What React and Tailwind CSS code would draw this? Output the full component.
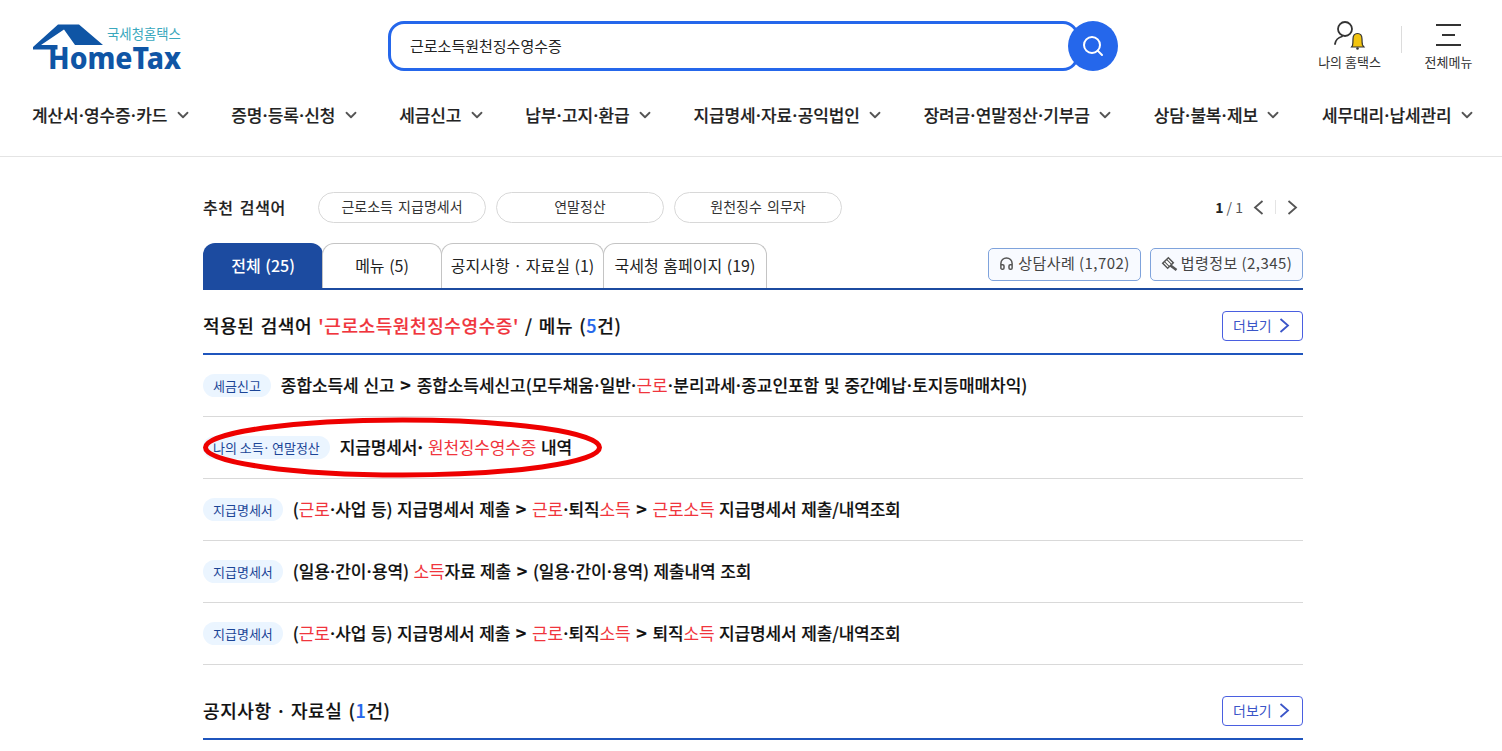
import React from "react";
import { ChevronDown, Search, Headphones } from "lucide-react";

const FONT = "[font-family:'Noto_Sans_CJK_KR','Noto_Sans',sans-serif]";

const NAV = [
  ["계산서", "영수증", "카드"],
  ["증명", "등록", "신청"],
  ["세금신고"],
  ["납부", "고지", "환급"],
  ["지급명세", "자료", "공익법인"],
  ["장려금", "연말정산", "기부금"],
  ["상담", "불복", "제보"],
  ["세무대리", "납세관리"],
];

const R = ({ children }) => <span className="text-[#f0353d] font-normal [-webkit-text-stroke:0px]">{children}</span>;
const D = () => <span className="-mx-[2px]">·</span>;
const G = () => <span className="font-bold text-[18px] mx-[1px]">&gt;</span>;

function Chev({ left = false, className = "" }) {
  return (
    <svg width="11" height="15" viewBox="0 0 11 15" fill="none" className={className}>
      <path d={left ? "M9.500 1 L2 7.500 L9.500 14" : "M1.500 1 L9 7.500 L1.500 14"} stroke="currentColor" strokeWidth="1.800" />
    </svg>
  );
}

function Logo() {
  return (
    <svg width="160" height="62" viewBox="0 0 160 62" className="block">
      <text x="74" y="17" fontSize="13.400" fontFamily="'Noto Sans CJK KR',sans-serif" fill="#3aa8bd">국세청홈택스</text>
      <text x="15" y="47" fontSize="31" fontWeight="800" textLength="133" lengthAdjust="spacingAndGlyphs" fontFamily="'Noto Sans',sans-serif" fill="#0f55a5">HomeTax</text>
      <path d="M0 25 L25 2.500 L46 2.500 L70 23 L42 23 L31 7.500 L8 23 L24.500 23 L24.500 27.500 L0 27.500 Z" fill="#0f55a5" />
    </svg>
  );
}

function Row({ tag, children, tight = false }) {
  return (
    <div className="flex items-center h-[62px] pb-[2px] border-b border-[#d9d9d9]">
      <span className="flex items-center h-[23px] mt-[2px] px-[10px] rounded-full bg-[#ebf5ff] text-[#1b4597] text-[13px] mr-[10px] whitespace-nowrap"><span>{tag}</span></span>
      <span className={`text-[17px] ${tight ? "tracking-[-0.07px]" : "tracking-[-0.15px]"} [word-spacing:1px] font-medium [-webkit-text-stroke:0.15px] text-[#111] whitespace-nowrap`}>{children}</span>
    </div>
  );
}

function More() {
  return (
    <span className="flex items-center justify-between h-[30px] w-[81px] pl-[10px] pr-[12px] rounded-[4px] border border-[#4a5fe0] text-[#3b55c8] text-[14px]">
      더보기
      <Chev />
    </span>
  );
}

function Tab({ w, children }) {
  return (
    <div className={`${w} flex items-center justify-center h-[45px] pb-[2px] bg-white border border-b-0 border-[#c4c4c4] rounded-t-[12px] -mr-px text-[16px] [word-spacing:1px] text-[#222] whitespace-nowrap`}><span>{children}</span></div>
  );
}

function Gavel() {
  return (
    <svg width="17" height="16" viewBox="0 0 17 16" fill="none">
      <g transform="rotate(45 7 7)" stroke="#555" strokeWidth="1.500">
        <rect x="3.500" y="3" width="7" height="8" fill="#fff" />
        <path d="M3.500 5.500 h7 M3.500 8.500 h7" strokeWidth="1" />
      </g>
      <path d="M9.500 9.500 L15.500 14" stroke="#555" strokeWidth="2.600" />
    </svg>
  );
}

export default function App() {
  return (
    <div className={`${FONT} w-[1502px] h-[751px] overflow-hidden bg-white text-[#222]`}>
      <header className="h-[157px] border-b border-[#e4e4e4]">
        <div className="flex items-start h-[92px] pl-[33px] pr-[29px]">
          <div className="w-[160px] h-[52px] mt-[22px]"><Logo /></div>
          <div className="flex items-center ml-[195px] mt-[21px]">
            <div className="flex items-center w-[691px] h-[50px] rounded-[16px] border-[3px] border-[#2567eb] pl-[19px] text-[15px] text-[#222]">근로소득원천징수영수증</div>
            <div className="flex items-center justify-center w-[50px] h-[50px] rounded-full bg-[#2567eb] -ml-[11px] relative">
              <Search size={24} color="#fff" strokeWidth={2} />
            </div>
          </div>
          <div className="flex ml-auto mt-[18px]">
            <div className="flex flex-col items-center w-[65px]">
              <svg width="36" height="32" viewBox="0 0 36 32" fill="none">
                <circle cx="13" cy="11" r="7" stroke="#333" strokeWidth="1.800" />
                <path d="M3 26 Q4 20 10 18.500" stroke="#333" strokeWidth="1.800" strokeLinecap="round" />
                <path d="M19.500 29 L20.500 27.500 C21 25 21 24 21 21 C21 17.500 23 15.500 25.500 15.500 C28 15.500 30 17.500 30 21 C30 24 30 25 30.500 27 L32 29 Z" fill="#f2c40f" stroke="#333" strokeWidth="1.200" />
                <circle cx="25.500" cy="30.500" r="1.300" fill="#333" />
              </svg>
              <span className="text-[13px] leading-[16px] mt-[4px] whitespace-nowrap text-[#333]">나의 홈택스</span>
            </div>
            <div className="w-px h-[27px] bg-[#dcdcdc] mt-[8px] ml-[19px] mr-[22px]" />
            <div className="flex flex-col items-center w-[49px]">
              <div className="flex flex-col items-center h-[32px] w-[25px] pt-[6px]">
                <div className="w-[25px] h-[2px] bg-[#333]" />
                <div className="w-[13px] h-[2px] bg-[#333] mt-[8px]" />
                <div className="w-[25px] h-[2px] bg-[#333] mt-[8px]" />
              </div>
              <span className="text-[13px] leading-[16px] mt-[4px] whitespace-nowrap text-[#333]">전체메뉴</span>
            </div>
          </div>
        </div>
        <nav className="flex pl-[32px] gap-[44px] h-[46px] items-center">
          {NAV.map((n) => (
            <span key={n[0]} className="flex items-center text-[17px] tracking-[-0.15px] font-medium [-webkit-text-stroke:0.15px] text-[#222] whitespace-nowrap">
              <span>
                {n.map((p, i) => (
                  <React.Fragment key={p}>{i > 0 && <D />}{p}</React.Fragment>
                ))}
              </span>
              <ChevronDown size={18} strokeWidth={2.400} color="#555" className="ml-[6.500px] -mr-[4.500px]" />
            </span>
          ))}
        </nav>
      </header>

      <main className="w-[1100px] ml-[203px]">
        <div className="flex items-center h-[32px] mt-[34px]">
          <span className="text-[16px] [word-spacing:2px] tracking-[0.6px] font-medium [-webkit-text-stroke:0.15px] text-[#222] w-[115px]">추천 검색어</span>
          <div className="flex gap-[10px]">
            {["근로소득 지급명세서", "연말정산", "원천징수 의무자"].map((t) => (
              <span key={t} className="flex items-center justify-center w-[168px] h-[31px] pb-[2px] rounded-full border border-[#d8d8d8] text-[14px] [word-spacing:2px] text-[#333]">{t}</span>
            ))}
          </div>
          <div className="flex items-center ml-auto text-[14px] text-[#555]">
            <b className="text-[#222] font-bold">1</b>&nbsp;/ 1
            <Chev left className="ml-[10px] text-[#555]" />
            <span className="w-px h-[14px] bg-[#e4e4e4] mx-[11px]" />
            <Chev className="mr-[5px] text-[#555]" />
          </div>
        </div>

        <div className="flex items-end h-[47px] mt-[20px] border-b-[2px] border-[#1c4ba0]">
          <div className="w-[120px] flex items-center justify-center h-[45px] pb-[2px] bg-[#1c4ba0] rounded-t-[12px] -mr-px text-[16px] [word-spacing:1px] font-medium text-white">전체 (25)</div>
          <Tab w="w-[120px]">메뉴 (5)</Tab>
          <Tab w="w-[163px]">공지사항<span className="-mx-[1px]"> · </span>자료실 (1)</Tab>
          <Tab w="w-[164px]">국세청 홈페이지 (19)</Tab>
          <div className="flex gap-[9px] ml-auto mb-[7px]">
            <span className="flex items-center justify-center w-[153px] h-[33px] pb-[2px] rounded-[5px] border border-[#7fa3dc] bg-[#f8faff] text-[15px] tracking-[0.45px] text-[#444] gap-[4px] whitespace-nowrap">
              <Headphones size={15} strokeWidth={2.400} color="#555" />상담사례 (1,702)
            </span>
            <span className="flex items-center justify-center w-[153px] h-[33px] pb-[2px] rounded-[5px] border border-[#7fa3dc] bg-[#f8faff] text-[15px] tracking-[0.45px] text-[#444] gap-[3px] whitespace-nowrap">
              <Gavel />법령정보 (2,345)
            </span>
          </div>
        </div>

        <div className="flex items-center justify-between h-[65px] pt-[8px] border-b-[2px] border-[#1f55bd]">
          <h2 className="text-[18px] tracking-[0.6px] [word-spacing:1.500px] font-medium [-webkit-text-stroke:0.2px] text-[#111]">적용된 검색어 <span className="text-[#f0353d]">'근로소득원천징수영수증'</span> / 메뉴 (<span className="text-[#2567eb]">5</span>건)</h2>
          <More />
        </div>

        <Row tight tag="세금신고">종합소득세 신고 <G /> 종합소득세신고(모두채움<D />일반<D /><R>근로</R><D />분리과세<D />종교인포함 및 중간예납<D />토지등매매차익)</Row>
        <div className="relative">
          <Row tag={<>나의 소득<span className="-mx-[1px]">·</span> 연말정산</>}>지급명세서<span className="-mx-[2px] font-bold">·</span> <R>원천징수영수증</R> 내역</Row>
          <svg width="402" height="62" viewBox="0 0 402 62" fill="none" className="absolute left-0 top-0 pointer-events-none">
            <ellipse cx="199.500" cy="30.500" rx="197" ry="27.500" stroke="#ee0000" strokeWidth="5" />
          </svg>
        </div>
        <Row tag="지급명세서">(<R>근로</R><D />사업 등) 지급명세서 제출 <G /> <R>근로</R><D />퇴직<R>소득</R> <G /> <R>근로소득</R> 지급명세서 제출/내역조회</Row>
        <Row tag="지급명세서">(일용<D />간이<D />용역) <R>소득</R>자료 제출 <G /> (일용<D />간이<D />용역) 제출내역 조회</Row>
        <Row tag="지급명세서">(<R>근로</R><D />사업 등) 지급명세서 제출 <G /> <R>근로</R><D />퇴직<R>소득</R> <G /> 퇴직<R>소득</R> 지급명세서 제출/내역조회</Row>

        <div className="flex items-center justify-between h-[75px] pt-[18px] border-b-[2px] border-[#1f55bd]">
          <h2 className="text-[18px] tracking-[0.6px] [word-spacing:1.500px] font-medium [-webkit-text-stroke:0.2px] text-[#111]">공지사항<span className="-mx-[2px]"> · </span>자료실 (<span className="text-[#2567eb]">1</span>건)</h2>
          <More />
        </div>
      </main>
    </div>
  );
}
